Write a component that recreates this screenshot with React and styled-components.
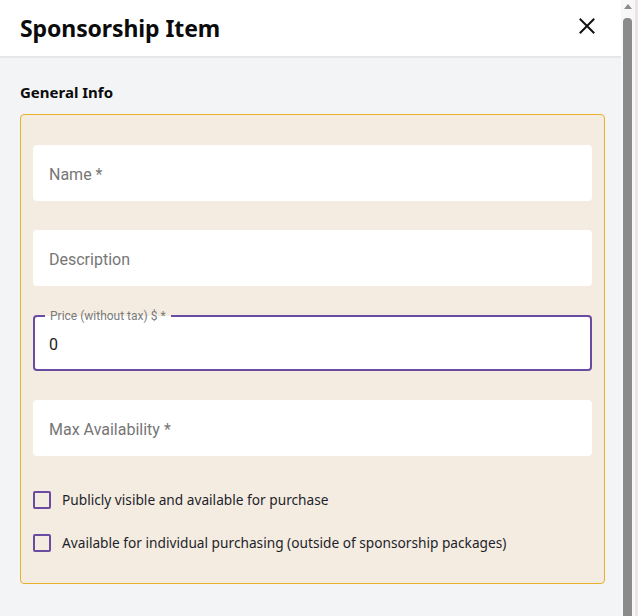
import React from 'react'
import styled, { createGlobalStyle } from 'styled-components'

const GlobalStyle = createGlobalStyle`
  html, body {
    margin: 0;
    padding: 0;
    height: 100%;
    overflow: hidden;
  }
  body {
    font-family: 'Noto Sans', sans-serif;
    color: #111;
  }
`

const Window = styled.div`
  display: flex;
  height: 100vh;
  background: #f3f4f6;
`

const Content = styled.div`
  flex: 1;
  min-width: 0;
  overflow: hidden;
`

// the window's scrollbar, drawn as it shows in the screenshot
const ScrollTrack = styled.div`
  display: flex;
  flex-direction: column;
  align-items: flex-start;
  flex-shrink: 0;
  width: 12px;
  padding-left: 2px;
  background: #f8f8f8;
  border-right: 3px solid #efe2e2;
`

const ScrollArrow = styled.div`
  width: 0;
  height: 0;
  margin: 4px 0 0 1px;
  border-left: 4px solid transparent;
  border-right: 4px solid transparent;
  border-bottom: 5px solid #8b8b8b;
`

const ScrollThumb = styled.div`
  flex: 1;
  width: 9px;
  margin-top: 9px;
  background: #8b8b8b;
  border-radius: 4px 4px 0 0;
`

const Header = styled.header`
  display: flex;
  align-items: center;
  justify-content: space-between;
  height: 56px;
  padding: 0 22px 0 20px;
  background: #fff;
  border-bottom: 2px solid #e6e7ea;
`

const Title = styled.h1`
  margin: 0;
  font-size: 23px;
  font-weight: 700;
  letter-spacing: -0.1px;
  color: #0b0b0b;
`

const CloseButton = styled.button`
  display: flex;
  align-items: center;
  justify-content: center;
  width: 24px;
  height: 24px;
  padding: 0;
  margin-top: -4px;
  border: none;
  background: none;
  cursor: pointer;
`

const Body = styled.main`
  padding: 24px 16px 30px 20px;
`

const SectionTitle = styled.h2`
  margin: 0 0 12px;
  font-size: 15px;
  font-weight: 700;
  color: #0b0b0b;
`

const Card = styled.section`
  display: flex;
  flex-direction: column;
  padding: 30px 12px 31px;
  background: #f4ece0;
  border: 1px solid #e8b12c;
  border-radius: 4px;
`

const Fields = styled.div`
  display: flex;
  flex-direction: column;
  gap: 29px;
`

const Field = styled.div`
  position: relative;
  display: flex;
  align-items: center;
  height: 56px;
  box-sizing: border-box;
  padding: 3px 16px 0;
  background: #fff;
  border-radius: 4px;
  border: ${p => (p.$focused ? '2px solid #6a4ba2' : 'none')};
  padding-left: ${p => (p.$focused ? '14px' : '16px')};
`

const Placeholder = styled.span`
  font-family: Roboto, sans-serif;
  font-size: 16px;
  color: #767676;
`

const Value = styled.span`
  font-family: Roboto, sans-serif;
  font-size: 16px;
  color: #1c1c1c;
`

const FloatLabel = styled.span`
  position: absolute;
  top: -9px;
  left: 10px;
  padding: 0 5px;
  font-family: Roboto, sans-serif;
  font-size: 12px;
  line-height: 16px;
  color: #7a7a7a;
  background: linear-gradient(to bottom, #f4ece0 50%, #fff 50%);
`

const Checks = styled.div`
  display: flex;
  flex-direction: column;
  gap: 24px;
  margin-top: 34px;
`

const CheckRow = styled.label`
  display: flex;
  align-items: center;
  gap: 11px;
  font-size: 13.7px;
  color: #1e1f2c;
  cursor: pointer;
`

const Box = styled.span`
  width: 18px;
  height: 18px;
  box-sizing: border-box;
  border: 2px solid #6a4ba2;
  border-radius: 2px;
  background: transparent;
  flex-shrink: 0;
`

const CloseIcon = () => (
  <svg width="16" height="16" viewBox="0 0 16 16">
    <path d="M1.5 1.5 14.5 14.5M14.5 1.5 1.5 14.5" stroke="#111" strokeWidth="2" strokeLinecap="square" />
  </svg>
)

const App = () => {
  return (
    <Window>
      <GlobalStyle />
      <Content>
        <Header>
          <Title>Sponsorship Item</Title>
          <CloseButton aria-label='Close'>
            <CloseIcon />
          </CloseButton>
        </Header>
        <Body>
          <SectionTitle>General Info</SectionTitle>
          <Card>
            <Fields>
              <Field>
                <Placeholder>Name *</Placeholder>
              </Field>
              <Field>
                <Placeholder>Description</Placeholder>
              </Field>
              <Field $focused>
                <FloatLabel>Price (without tax) $ *</FloatLabel>
                <Value>0</Value>
              </Field>
              <Field>
                <Placeholder>Max Availability *</Placeholder>
              </Field>
            </Fields>
            <Checks>
              <CheckRow>
                <Box />
                Publicly visible and available for purchase
              </CheckRow>
              <CheckRow>
                <Box />
                Available for individual purchasing (outside of sponsorship packages)
              </CheckRow>
            </Checks>
          </Card>
        </Body>
      </Content>
      <ScrollTrack>
        <ScrollArrow />
        <ScrollThumb />
      </ScrollTrack>
    </Window>
  )
}

export default App
